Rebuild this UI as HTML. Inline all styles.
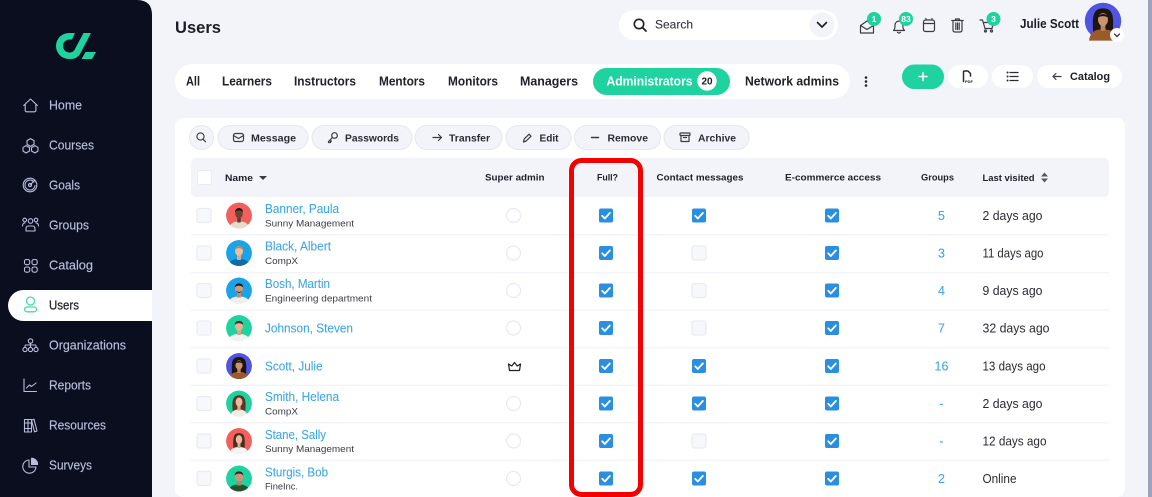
<!DOCTYPE html>
<html><head><meta charset="utf-8"><title>Users</title>
<style>
html,body{margin:0;padding:0;width:1152px;height:497px;overflow:hidden;background:#f2f4f9}
svg{display:block;filter:blur(.35px)}
text{font-family:"Liberation Sans",sans-serif;font-size:12px;fill:#1c1d26}
.n{fill:#b9bedb;font-size:12.5px;stroke:#b9bedb;stroke-width:.15}
.t{font-size:12.5px;font-weight:bold;fill:#20212b}
.b{font-size:10.5px;font-weight:bold;fill:#2a2b35}
.h{font-size:9.5px;font-weight:bold;fill:#20212b}
.l{font-size:12.5px;fill:#3fa7e6;stroke:#3fa7e6;stroke-width:.1}
.s{font-size:9.5px;fill:#3a3b45}
.d{font-size:12.5px;fill:#2a2b35}
.nav{fill:none;stroke:#b9bedb;stroke-width:1.1;stroke-linecap:round;stroke-linejoin:round}
.ic{fill:none;stroke:#3a3b45;stroke-width:1.2;stroke-linecap:round;stroke-linejoin:round}
.ck{fill:#f7f8fb;stroke:#e9ebf3;stroke-width:1.2}
.pb{fill:#f2f4f9;stroke:#e5e7f1;stroke-width:1}
.bd{font-size:8.5px;font-weight:bold;fill:#fff;text-anchor:middle}
</style></head><body>
<svg width="1152" height="497" viewBox="0 0 1152 497" xmlns="http://www.w3.org/2000/svg">
<defs>
<clipPath id="c"><circle r="13"/></clipPath>
<g id="on"><rect x="-7" y="-7" width="14" height="14" rx="2" fill="#2a8fe0"/><path d="M-3.8 .3L-1.2 3L3.9-2.6" fill="none" stroke="#fff" stroke-width="1.8" stroke-linecap="round" stroke-linejoin="round"/></g>
<rect id="off" class="ck" x="-7" y="-7" width="14" height="14" rx="2.5"/>
<circle id="rd" r="7" fill="#fff" stroke="#e8e9f2" stroke-width="1.2"/>
<g id="julie"><circle r="13" fill="#4f55e0"/><path d="M-7 13C-7 3-8-2-6-6C-4-10 4-10 6-6C8-2 7 3 7 13Z" fill="#1f1510"/><path d="M-10 14C-9 7-5 6 0 6C5 6 9 7 10 14Z" fill="#9a5a2a"/><rect x="-1.7" y="2" width="3.4" height="5" fill="#b98463"/><ellipse cy="-1" rx="3.6" ry="4.6" fill="#c9946f"/><path d="M-4-2C-3-6 3-6 4-2C2-4-2-4-4-2Z" fill="#1f1510"/></g>
</defs>

<rect width="1152" height="497" fill="#f2f4f9"/>
<rect x="1148" y="0" width="4" height="497" fill="#9fa1ba"/>

<!-- sidebar -->
<path d="M0 0H137Q152 0 152 15V497H0Z" fill="#0a0e1f"/>
<path d="M75 33H69A13 13 0 0 0 69 59H71C75 59 78 57 80 54L91 33H83.500L75.500 48C74 51.500 72 52.500 69.500 52.500A6.500 6.500 0 0 1 69.500 39.500H72Z" fill="#1fd3a0"/>
<path d="M85.500 52H96L92 59H81.500Z" fill="#1fd3a0"/>

<path d="M8 305.500A15.500 15.500 0 0 1 23.500 290H152V321H23.500A15.500 15.500 0 0 1 8 305.500Z" fill="#fff"/>

<g class="nav">
<path d="M23.700 105.500L30.500 99L37.400 105.500M25.200 104.300V110.300Q25.200 111.800 26.700 111.800H34.400Q35.900 111.800 35.900 110.300V104.300"/>
<path d="M30.500 138.600L34 140.600V144.400L30.500 146.400L27 144.400V140.600ZM26 145.600L29.500 147.600V151L26 153L23 151V147.600ZM35 145.600L38 147.600V151L35 153L31.500 151V147.600Z"/>
<circle cx="30" cy="185" r="6.800"/><path d="M34 182A5 5 0 1 0 35 185.500"/><circle cx="30" cy="185" r="1.600"/><path d="M30 185L35 180"/>
<circle cx="30.500" cy="221" r="2.300"/><path d="M26 231V229Q26 226 28.500 226H32.500Q35 226 35 229V231Z"/><circle cx="24.700" cy="220" r="1.800"/><circle cx="36" cy="220" r="1.800"/><path d="M22.500 226Q22.500 223 25 223M38.500 226Q38.500 223 36 223"/>
<rect x="24.500" y="259.500" width="5.200" height="5.200" rx="1.800"/><rect x="32" y="259.500" width="5.200" height="5.200" rx="1.800"/><rect x="24.500" y="267" width="5.200" height="5.200" rx="1.800"/><rect x="32" y="267" width="5.200" height="5.200" rx="1.800"/>
<circle cx="30.500" cy="341" r="2.200"/><circle cx="25" cy="349.500" r="2.100"/><circle cx="30.500" cy="349.500" r="2.100"/><circle cx="36" cy="349.500" r="2.100"/><path d="M30.500 343.300V347.400M25 347.400V346Q25 345 26 345H35Q36 345 36 346V347.400"/>
<path d="M24 379V391.500H36.500M26.500 388L29.500 385L31.500 386.500L36 383"/>
<path d="M24.500 419.500H28V432H24.500ZM28 419.500H31.500V432H28ZM31.500 420L34 419.300L37 431L34.500 431.800ZM24.500 423H31.500M24.500 428.500H31.500"/>
<path d="M29 460A6.600 6.600 0 1 0 36 467H29Z"/><path d="M31.500 458.300A6 6 0 0 1 37.600 464.500H31.500Z" fill="#b9bedb"/>
</g>
<g fill="none" stroke="#45d9ae" stroke-width="1.300"><circle cx="30.500" cy="301" r="4"/><rect x="24.500" y="307" width="12" height="4.800" rx="2.400"/></g>

<text class="n" x="49" y="109.500" textLength="33" lengthAdjust="spacingAndGlyphs">Home</text>
<text class="n" x="49" y="149.500" textLength="45" lengthAdjust="spacingAndGlyphs">Courses</text>
<text class="n" x="49" y="189.500" textLength="31" lengthAdjust="spacingAndGlyphs">Goals</text>
<text class="n" x="49" y="229.500" textLength="40" lengthAdjust="spacingAndGlyphs">Groups</text>
<text class="n" x="49" y="269.500" textLength="44" lengthAdjust="spacingAndGlyphs">Catalog</text>
<text x="49" y="309.500" textLength="30" lengthAdjust="spacingAndGlyphs" style="font-size:12.5px;fill:#23242e;stroke:#23242e;stroke-width:.25">Users</text>
<text class="n" x="49" y="349.500" textLength="77" lengthAdjust="spacingAndGlyphs">Organizations</text>
<text class="n" x="49" y="389.500" textLength="42" lengthAdjust="spacingAndGlyphs">Reports</text>
<text class="n" x="49" y="429.500" textLength="57" lengthAdjust="spacingAndGlyphs">Resources</text>
<text class="n" x="49" y="469.500" textLength="43" lengthAdjust="spacingAndGlyphs">Surveys</text>

<!-- top bar -->
<text x="175" y="33" textLength="46" lengthAdjust="spacingAndGlyphs" style="font-size:17px;font-weight:bold;fill:#1c1d26">Users</text>
<rect x="619" y="10" width="219" height="30" rx="15" fill="#fff"/>
<circle cx="639" cy="24" r="4.700" fill="none" stroke="#1c1d26" stroke-width="1.600"/><path d="M642.500 27.500L646 31" stroke="#1c1d26" stroke-width="1.800" stroke-linecap="round"/>
<text x="655" y="28.500" textLength="38" lengthAdjust="spacingAndGlyphs" style="font-size:12px;fill:#33343e;stroke:#33343e;stroke-width:.1">Search</text>
<circle cx="822" cy="25" r="12.500" fill="#f2f4f9"/><path d="M817.500 22.500L822 27L826.500 22.500" fill="none" stroke="#1c1d26" stroke-width="1.600" stroke-linecap="round" stroke-linejoin="round"/>

<g class="ic">
<path d="M860.500 25.500V33H873.500V25.500L867 21ZM860.500 25.500L867 29.500L873.500 25.500"/>
<path d="M893.500 30.500H904.500Q902.800 29 902.800 26V25A3.900 3.900 0 0 0 895 25V26Q895 29 893.500 30.500ZM897.500 32.300Q899 33.600 900.500 32.300"/>
<rect x="923.500" y="20" width="11" height="11.500" rx="2"/><path d="M923.500 23.500H934.500M926 18.500V20M932 18.500V20"/>
<path d="M953 21.500V30Q953 32 955 32H960Q962 32 962 30V21.500M951.800 20.500H963.200M955.500 20.500V19H959.500V20.500M955.800 23V29.500M957.500 23V29.500M959.200 23V29.500"/>
<path d="M980 20H982.500L985 28.500H992L993.500 22.500H983.500"/><circle cx="985.500" cy="31" r="1"/><circle cx="991.500" cy="31" r="1"/>
</g>
<circle cx="874" cy="19" r="7" fill="#1fd3a0"/><text class="bd" x="874" y="22">1</text>
<circle cx="906" cy="19" r="7" fill="#1fd3a0"/><text class="bd" x="906" y="22">83</text>
<circle cx="993.500" cy="19" r="7" fill="#1fd3a0"/><text class="bd" x="993.500" y="22">3</text>
<text x="1020" y="28" textLength="59" lengthAdjust="spacingAndGlyphs" style="font-size:12.5px;font-weight:bold;fill:#1c1d26">Julie Scott</text>
<g transform="translate(1103,21) scale(1.4)"><use href="#julie"/></g>
<circle cx="1117" cy="35" r="7" fill="#fff"/><path d="M1114.500 34L1117 36.500L1119.500 34" fill="none" stroke="#1c1d26" stroke-width="1.200" stroke-linecap="round"/>

<!-- tabs -->
<rect x="175" y="64" width="675" height="35" rx="17.500" fill="#fff"/>
<text class="t" x="186" y="85.500" textLength="14" lengthAdjust="spacingAndGlyphs">All</text>
<text class="t" x="222" y="85.500" textLength="50" lengthAdjust="spacingAndGlyphs">Learners</text>
<text class="t" x="294" y="85.500" textLength="62" lengthAdjust="spacingAndGlyphs">Instructors</text>
<text class="t" x="379" y="85.500" textLength="46" lengthAdjust="spacingAndGlyphs">Mentors</text>
<text class="t" x="448" y="85.500" textLength="50" lengthAdjust="spacingAndGlyphs">Monitors</text>
<text class="t" x="520" y="85.500" textLength="58" lengthAdjust="spacingAndGlyphs">Managers</text>
<rect x="593" y="68" width="137" height="27" rx="13.500" fill="#1fd3a0"/>
<text x="606.500" y="85.500" textLength="86" lengthAdjust="spacingAndGlyphs" style="font-size:12.5px;font-weight:bold;fill:#fff">Administrators</text>
<circle cx="707" cy="81" r="9.700" fill="#fff"/><text x="707" y="84.500" text-anchor="middle" style="font-size:10px;font-weight:bold">20</text>
<text class="t" x="745" y="85.500" textLength="94" lengthAdjust="spacingAndGlyphs">Network admins</text>
<g fill="#20212b"><circle cx="866" cy="77.500" r="1.300"/><circle cx="866" cy="81.500" r="1.300"/><circle cx="866" cy="85.500" r="1.300"/></g>

<rect x="902" y="64.500" width="42" height="24.500" rx="12.200" fill="#1fd3a0"/>
<path d="M923 72.500V80.500M919 76.500H927" stroke="#fff" stroke-width="1.500" stroke-linecap="round"/>
<rect x="948" y="65" width="40" height="23" rx="11.500" fill="#fff"/>
<path d="M963.500 81.500V72Q963.500 71 964.500 71H968L970.500 73.500V76" fill="none" stroke="#2a2b35" stroke-width="1.500" stroke-linecap="round" stroke-linejoin="round"/><text x="965" y="83" style="font-size:4px;font-weight:bold">PDF</text>
<rect x="992" y="65" width="41" height="23" rx="11.500" fill="#fff"/>
<path d="M1010 72.500H1018M1010 76.500H1018M1010 80.500H1018" fill="none" stroke="#2a2b35" stroke-width="1.300" stroke-linecap="round"/><path d="M1007.500 72.500h.1M1007.500 76.500h.1M1007.500 80.500h.1" stroke="#2a2b35" stroke-width="1.900" stroke-linecap="round"/>
<rect x="1037" y="65" width="85" height="23" rx="11.500" fill="#fff"/>
<path d="M1061 76.500H1053M1056 73.500L1053 76.500L1056 79.500" class="ic"/>
<text x="1070" y="80" textLength="40" lengthAdjust="spacingAndGlyphs" style="font-size:11px;font-weight:bold">Catalog</text>

<!-- panel -->
<rect x="175" y="118" width="950" height="379" rx="8" fill="#fff"/>
<circle class="pb" cx="201.500" cy="137.500" r="12"/>
<circle cx="200.500" cy="136.500" r="3.600" fill="none" stroke="#3a3b45" stroke-width="1.100"/><path d="M203 139.200L205.500 141.700" stroke="#3a3b45" stroke-width="1.200" stroke-linecap="round"/>
<rect class="pb" x="218" y="125.500" width="90" height="24" rx="12"/>
<rect class="pb" x="312" y="125.500" width="100" height="24" rx="12"/>
<rect class="pb" x="415" y="125.500" width="87" height="24" rx="12"/>
<rect class="pb" x="506" y="125.500" width="65" height="24" rx="12"/>
<rect class="pb" x="574.500" y="125.500" width="86" height="24" rx="12"/>
<rect class="pb" x="664" y="125.500" width="85" height="24" rx="12"/>
<g class="ic">
<rect x="233.500" y="133.500" width="10" height="8" rx="2"/><path d="M233.500 135.500L238.500 138.500L243.500 135.500"/>
<circle cx="334.500" cy="135.500" r="2.800"/><path d="M332.500 137.500L328.500 141.500V142.500H330.500V141H331.500"/>
<path d="M433 137.500H441.500M438.500 134.500L441.500 137.500L438.500 140.500"/>
<path d="M523.500 142L524.200 139L529 134.200L531 136.200L526.200 141Z"/>
<path d="M591.500 137.500H598.500" stroke-width="1.500"/>
<rect x="680" y="133" width="10" height="2.500" rx=".6"/><path d="M681 135.500V141.500H689V135.500M683.500 137.500H686.500"/>
</g>
<text class="b" x="251" y="141.500" textLength="45" lengthAdjust="spacingAndGlyphs">Message</text>
<text class="b" x="345" y="141.500" textLength="54" lengthAdjust="spacingAndGlyphs">Passwords</text>
<text class="b" x="449" y="141.500" textLength="41" lengthAdjust="spacingAndGlyphs">Transfer</text>
<text class="b" x="539.500" y="141.500" textLength="19" lengthAdjust="spacingAndGlyphs">Edit</text>
<text class="b" x="607.500" y="141.500" textLength="40.500" lengthAdjust="spacingAndGlyphs">Remove</text>
<text class="b" x="698" y="141.500" textLength="38" lengthAdjust="spacingAndGlyphs">Archive</text>

<!-- table head -->
<rect x="191" y="158" width="918" height="39" rx="5" fill="#f2f4f9"/>
<rect x="197.500" y="170.500" width="14" height="14" rx="2.500" fill="#fff" stroke="#e9ebf3"/>
<text class="h" x="225" y="181" textLength="28" lengthAdjust="spacingAndGlyphs">Name</text>
<path d="M259 176H267L263 180Z" fill="#3a3b45"/>
<text class="h" x="485" y="180.500" textLength="59.500" lengthAdjust="spacingAndGlyphs">Super admin</text>
<text class="h" x="597" y="180.500" textLength="21" lengthAdjust="spacingAndGlyphs">Full?</text>
<text class="h" x="656.500" y="180.500" textLength="87" lengthAdjust="spacingAndGlyphs">Contact messages</text>
<text class="h" x="785" y="180.500" textLength="96" lengthAdjust="spacingAndGlyphs">E-commerce access</text>
<text class="h" x="921" y="180.500" textLength="33" lengthAdjust="spacingAndGlyphs">Groups</text>
<text class="h" x="982.500" y="181" textLength="52" lengthAdjust="spacingAndGlyphs">Last visited</text>
<path d="M1041 176.500L1044.500 172.500L1048 176.500ZM1041 178.500L1044.500 182.500L1048 178.500Z" fill="#55565f"/>

<!-- separators -->
<g fill="#f2f4f9">
<rect x="191" y="234" width="918" height="1.500"/><rect x="191" y="272" width="918" height="1.500"/><rect x="191" y="309.500" width="918" height="1.500"/><rect x="191" y="347" width="918" height="1.500"/><rect x="191" y="384.500" width="918" height="1.500"/><rect x="191" y="422" width="918" height="1.500"/><rect x="191" y="459.500" width="918" height="1.500"/>
</g>

<!-- row checkboxes -->
<use href="#off" x="204" y="215.500"/><use href="#off" x="204" y="253"/><use href="#off" x="204" y="290.500"/><use href="#off" x="204" y="328"/><use href="#off" x="204" y="366"/><use href="#off" x="204" y="403.500"/><use href="#off" x="204" y="441"/><use href="#off" x="204" y="478.500"/>

<!-- avatars -->
<g transform="translate(239,215.500)" clip-path="url(#c)"><circle r="13" fill="#f25f5c"/><path d="M-10 14C-9 7-5 6 0 6C5 6 10 7 10 14Z" fill="#e6dccd"/><rect x="-1.700" y="2" width="3.400" height="5" fill="#5d3c2c"/><ellipse cy="-2" rx="3.800" ry="4.800" fill="#6b4432"/><path d="M-4-3C-4-9 4-9 4-3C2-6-2-6-4-3Z" fill="#1d1410"/></g>
<g transform="translate(239,253)" clip-path="url(#c)"><circle r="13" fill="#1aa3e8"/><path d="M-11 14C-10 7-5 6 0 6C5 6 10 7 11 14Z" fill="#0f6aa8"/><rect x="-2" y="2" width="4" height="5" fill="#e0aa88"/><ellipse cy="-2" rx="4" ry="5" fill="#edbd9d"/><path d="M-4.200-3C-4.500-8 4.500-8 4.200-3C2-5.500-2-5.500-4.200-3Z" fill="#b98a58"/></g>
<g transform="translate(239,290.500)" clip-path="url(#c)"><circle r="13" fill="#1aa3e8"/><path d="M-11 14C-10 7-5 6 0 6C5 6 10 7 11 14Z" fill="#f1efee"/><rect x="-2" y="2" width="4" height="5" fill="#c08d6d"/><ellipse cy="-2" rx="4" ry="5" fill="#cf9c7b"/><path d="M-4.200-3C-4.500-8.500 4.500-8.500 4.200-3C2-5.500-2-5.500-4.200-3Z" fill="#1e1a18"/><path d="M-3.500 0Q0 5 3.500 0Q0 3-3.500 0Z" fill="#3a2b25"/></g>
<g transform="translate(239,328)" clip-path="url(#c)"><circle r="13" fill="#1fd3a0"/><path d="M-11 14C-10 7-5 6 0 6C5 6 10 7 11 14Z" fill="#f3f2f0"/><rect x="-2" y="2" width="4" height="5" fill="#d8a585"/><ellipse cy="-2" rx="4" ry="5" fill="#e3b394"/><path d="M-4.200-3C-4.500-8.500 4.500-8.500 4.200-3C2-5.500-2-5.500-4.200-3Z" fill="#3c2a20"/></g>
<g transform="translate(239,366)" clip-path="url(#c)"><use href="#julie"/></g>
<g transform="translate(239,403.500)" clip-path="url(#c)"><circle r="13" fill="#1fd3a0"/><path d="M-6 10C-7 2-7-3-5-6C-3-9 3-9 5-6C7-3 7 2 6 10Z" fill="#5b3526"/><path d="M-9 14C-8 7-4 6 0 6C4 6 8 7 9 14Z" fill="#f2ece6"/><rect x="-1.600" y="2" width="3.200" height="5" fill="#dcaa8c"/><ellipse cy="-1.500" rx="3.400" ry="4.500" fill="#eabc9f"/></g>
<g transform="translate(239,441)" clip-path="url(#c)"><circle r="13" fill="#f25f5c"/><path d="M-5.500 8C-6 2-6-3-4.500-6C-3-8.500 3-8.500 4.500-6C6-3 6 2 5.500 8Z" fill="#4a2c20"/><path d="M-10 14C-9 7-4 6 0 6C4 6 9 7 10 14Z" fill="#f6f3f0"/><rect x="-1.500" y="2" width="3" height="5" fill="#dcaa8c"/><ellipse cy="-1.500" rx="3.200" ry="4.400" fill="#eabc9f"/></g>
<g transform="translate(239,478.500)" clip-path="url(#c)"><circle r="13" fill="#1fd3a0"/><path d="M-11 14C-10 7-5 6 0 6C5 6 10 7 11 14Z" fill="#22532f"/><rect x="-2" y="2" width="4" height="5" fill="#b98263"/><ellipse cy="-2" rx="4.200" ry="5" fill="#cc9674"/><path d="M-4.300-3C-4.500-8.500 4.500-8.500 4.300-3C2-5.500-2-5.500-4.300-3Z" fill="#3a281d"/></g>

<!-- names -->
<text class="l" x="265" y="213" textLength="74" lengthAdjust="spacingAndGlyphs">Banner, Paula</text>
<text class="s" x="265" y="226.500" textLength="89" lengthAdjust="spacingAndGlyphs">Sunny Management</text>
<text class="l" x="265" y="250.500" textLength="66" lengthAdjust="spacingAndGlyphs">Black, Albert</text>
<text class="s" x="265" y="264" textLength="33" lengthAdjust="spacingAndGlyphs">CompX</text>
<text class="l" x="265" y="288" textLength="65" lengthAdjust="spacingAndGlyphs">Bosh, Martin</text>
<text class="s" x="265" y="301.500" textLength="107" lengthAdjust="spacingAndGlyphs">Engineering department</text>
<text class="l" x="265" y="332.500" textLength="88" lengthAdjust="spacingAndGlyphs">Johnson, Steven</text>
<text class="l" x="265" y="370.500" textLength="57.500" lengthAdjust="spacingAndGlyphs">Scott, Julie</text>
<text class="l" x="265" y="401" textLength="74" lengthAdjust="spacingAndGlyphs">Smith, Helena</text>
<text class="s" x="265" y="414.500" textLength="33" lengthAdjust="spacingAndGlyphs">CompX</text>
<text class="l" x="265" y="439" textLength="61" lengthAdjust="spacingAndGlyphs">Stane, Sally</text>
<text class="s" x="265" y="452" textLength="89" lengthAdjust="spacingAndGlyphs">Sunny Management</text>
<text class="l" x="265" y="476.500" textLength="63" lengthAdjust="spacingAndGlyphs">Sturgis, Bob</text>
<text class="s" x="265" y="489.500" textLength="33" lengthAdjust="spacingAndGlyphs">FineInc.</text>

<!-- super admin -->
<use href="#rd" x="513.500" y="215.500"/><use href="#rd" x="513.500" y="253"/><use href="#rd" x="513.500" y="290.500"/><use href="#rd" x="513.500" y="328"/><use href="#rd" x="513.500" y="403.500"/><use href="#rd" x="513.500" y="441"/><use href="#rd" x="513.500" y="478.500"/>
<path d="M509.500 370.500L508.500 364L511.800 366L514.500 362.500L517.200 366L520.500 364L519.500 370.500Z" fill="none" stroke="#1c1d26" stroke-width="1.200" stroke-linejoin="round"/>

<!-- full -->
<use href="#on" x="606" y="215.500"/><use href="#on" x="606" y="253"/><use href="#on" x="606" y="290.500"/><use href="#on" x="606" y="328"/><use href="#on" x="606" y="366"/><use href="#on" x="606" y="403.500"/><use href="#on" x="606" y="441"/><use href="#on" x="606" y="478.500"/>
<!-- contact -->
<use href="#on" x="699" y="215.500"/><use href="#off" x="699" y="253"/><use href="#off" x="699" y="290.500"/><use href="#off" x="699" y="328"/><use href="#on" x="699" y="366"/><use href="#on" x="699" y="403.500"/><use href="#off" x="699" y="441"/><use href="#on" x="699" y="478.500"/>
<!-- ecommerce -->
<use href="#on" x="832" y="215.500"/><use href="#on" x="832" y="253"/><use href="#on" x="832" y="290.500"/><use href="#on" x="832" y="328"/><use href="#on" x="832" y="366"/><use href="#on" x="832" y="403.500"/><use href="#on" x="832" y="441"/><use href="#on" x="832" y="478.500"/>

<!-- groups -->
<g text-anchor="middle">
<text class="l" x="941.500" y="220">5</text><text class="l" x="941.500" y="257.500">3</text><text class="l" x="941.500" y="295">4</text><text class="l" x="941.500" y="332.500">7</text><text class="l" x="941.500" y="370.500">16</text><text class="l" x="941.500" y="408">-</text><text class="l" x="941.500" y="445.500">-</text><text class="l" x="941.500" y="483">2</text>
</g>
<!-- last visited -->
<text class="d" x="982.500" y="220" textLength="60" lengthAdjust="spacingAndGlyphs">2 days ago</text>
<text class="d" x="982.500" y="257.500" textLength="61" lengthAdjust="spacingAndGlyphs">11 days ago</text>
<text class="d" x="982.500" y="295" textLength="60" lengthAdjust="spacingAndGlyphs">9 days ago</text>
<text class="d" x="982.500" y="332.500" textLength="67" lengthAdjust="spacingAndGlyphs">32 days ago</text>
<text class="d" x="982.500" y="370.500" textLength="63" lengthAdjust="spacingAndGlyphs">13 days ago</text>
<text class="d" x="982.500" y="408" textLength="60" lengthAdjust="spacingAndGlyphs">2 days ago</text>
<text class="d" x="982.500" y="445.500" textLength="64" lengthAdjust="spacingAndGlyphs">12 days ago</text>
<text class="d" x="982.500" y="483" textLength="34" lengthAdjust="spacingAndGlyphs">Online</text>

<!-- red highlight -->
<rect x="571.500" y="160.500" width="69" height="334" rx="10" fill="none" stroke="#fff" stroke-opacity=".7" stroke-width="6.500"/>
<rect x="571.500" y="160.500" width="69" height="334" rx="10" fill="none" stroke="#f40000" stroke-width="5"/>
</svg>
</body></html>
